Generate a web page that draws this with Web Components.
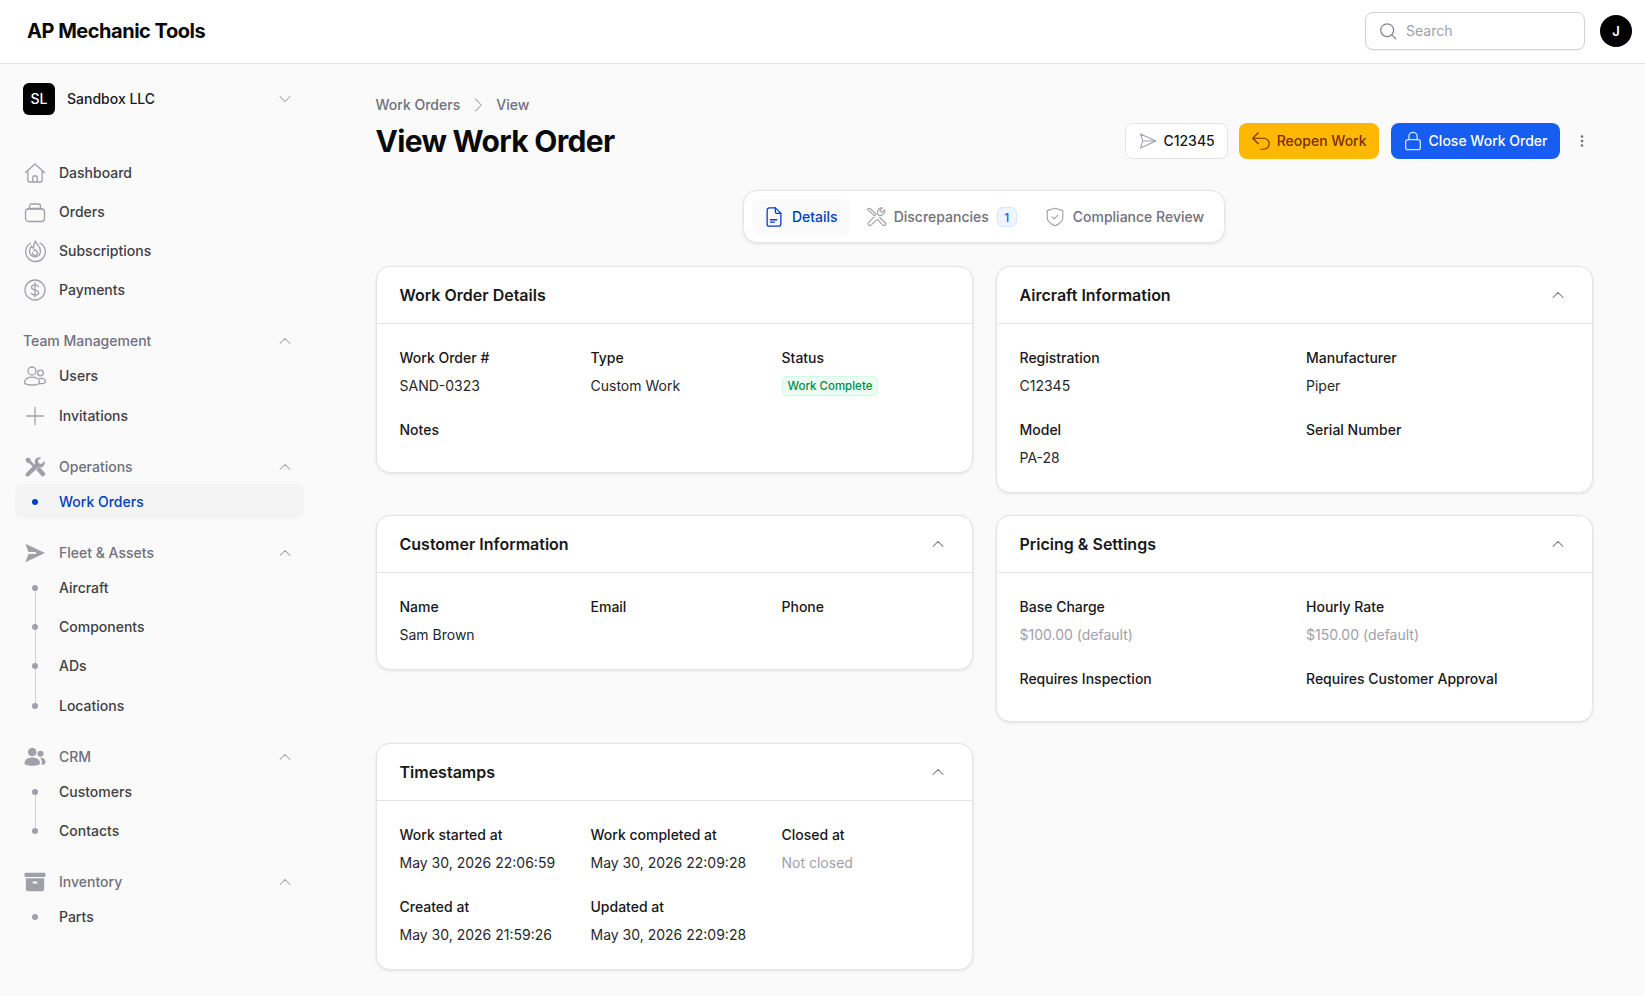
<!DOCTYPE html>
<html lang="en"><head><meta charset="utf-8"><title>View Work Order</title>
<style>
html,body{margin:0;padding:0;height:100%;background:#fafafa}
body{font:14px/20px Inter,"Liberation Sans",sans-serif;color:#18181b;-webkit-font-smoothing:antialiased}
</style></head><body>
<app-shell>
  <top-bar slot="top"></top-bar>
  <side-nav slot="side">
    <org-switch></org-switch>
    <nav-section first>
      <nav-item icon="home">Dashboard</nav-item>
      <nav-item icon="orders">Orders</nav-item>
      <nav-item icon="flame">Subscriptions</nav-item>
      <nav-item icon="dollar">Payments</nav-item>
    </nav-section>
    <nav-section title="Team Management">
      <nav-item icon="users">Users</nav-item>
      <nav-item icon="plus">Invitations</nav-item>
    </nav-section>
    <nav-section title="Operations" icon="tools">
      <nav-item dot active>Work Orders</nav-item>
    </nav-section>
    <nav-section title="Fleet &amp; Assets" icon="plane">
      <nav-item dot line="start">Aircraft</nav-item>
      <nav-item dot line="mid">Components</nav-item>
      <nav-item dot line="mid">ADs</nav-item>
      <nav-item dot line="end">Locations</nav-item>
    </nav-section>
    <nav-section title="CRM" icon="crm">
      <nav-item dot line="start">Customers</nav-item>
      <nav-item dot line="end">Contacts</nav-item>
    </nav-section>
    <nav-section title="Inventory" icon="archive">
      <nav-item dot>Parts</nav-item>
    </nav-section>
  </side-nav>
  <page-head></page-head>
  <tab-bar></tab-bar>
  <card-grid>
    <info-card title="Work Order Details" cols="3" nochev>
      <info-field label="Work Order #">SAND-0323</info-field>
      <info-field label="Type">Custom Work</info-field>
      <info-field label="Status"><status-badge>Work Complete</status-badge></info-field>
      <info-field label="Notes"></info-field>
    </info-card>
    <info-card title="Aircraft Information" cols="2">
      <info-field label="Registration">C12345</info-field>
      <info-field label="Manufacturer">Piper</info-field>
      <info-field label="Model">PA-28</info-field>
      <info-field label="Serial Number"></info-field>
    </info-card>
    <info-card title="Customer Information" cols="3">
      <info-field label="Name">Sam Brown</info-field>
      <info-field label="Email"></info-field>
      <info-field label="Phone"></info-field>
    </info-card>
    <info-card title="Pricing &amp; Settings" cols="2">
      <info-field label="Base Charge" muted>$100.00 (default)</info-field>
      <info-field label="Hourly Rate" muted>$150.00 (default)</info-field>
      <info-field label="Requires Inspection"></info-field>
      <info-field label="Requires Customer Approval"></info-field>
    </info-card>
    <info-card title="Timestamps" cols="3">
      <info-field label="Work started at">May 30, 2026 22:06:59</info-field>
      <info-field label="Work completed at">May 30, 2026 22:09:28</info-field>
      <info-field label="Closed at" muted>Not closed</info-field>
      <info-field label="Created at">May 30, 2026 21:59:26</info-field>
      <info-field label="Updated at">May 30, 2026 22:09:28</info-field>
    </info-card>
  </card-grid>
</app-shell>
<script>
const ICONS={
home:'<path d="M2.5 11.5 12 3l9.5 8.500M4.800 9.600V19a2 2 0 0 0 2 2h10.400a2 2 0 0 0 2-2V9.600M9.800 21v-5a1 1 0 0 1 1-1h2.400a1 1 0 0 1 1 1v5"/>',
orders:'<path d="M6.500 8.500V6.200c0-1.300.9-2.200 2-2.200h7c1.100 0 2 .9 2 2.200v2.300M4.700 8.800c.4-.2.9-.3 1.300-.3h12c.5 0 .9.100 1.300.3"/><rect x="2.500" y="9" width="19" height="12.500" rx="3"/>',
flame:'<path d="M7.500 4.300A9.800 9.800 0 1 0 17 4"/><path d="M12.500 2c.3 2.600 5 4.800 5 10.300a5.500 5.500 0 0 1-11 0c0-2.300.9-3.900 2.100-5.300.2 1.400.8 2.100 1.700 2.400C10.500 7 11 4 12.500 2Z"/><path d="M9.500 14a2.500 2.500 0 1 0 4.300-1.800c-.7-.7-1.300-1-1.800-1.700-.3.800-.7 1.100-1.300 1.500"/>',
dollar:'<circle cx="12" cy="12" r="10"/><path d="M15.500 8.700c-.6-1.100-1.900-1.800-3.500-1.800-2 0-3.500 1-3.500 2.600 0 3.400 7.200 1.700 7.200 5.100 0 1.600-1.600 2.600-3.700 2.600-1.700 0-3.100-.7-3.700-1.800M12 5v14"/>',
users:'<circle cx="9" cy="7" r="4"/><circle cx="17.500" cy="9" r="2.800"/><path d="M1.500 18.500C1.500 15 5 13.200 9 13.200s7.500 1.800 7.500 5.300c0 1.400-3.400 2.500-7.500 2.500s-7.500-1.100-7.500-2.500Z"/><path d="M16.500 14.500c3.400-.5 6 .8 6 3.200 0 1.200-2 1.900-5.800 1.900"/>',
plus:'<path d="M12 3.500v17M3.500 12h17"/>',
search:'<circle cx="11" cy="11" r="7.700"/><path d="m17 17 4.300 4.300"/>',
undo:'<path d="M9 3 3 9l6 6M3 9h12a6 6 0 0 1 0 12h-3"/>',
lock:'<rect x="4" y="10.500" width="16" height="11" rx="2.500"/><path d="M7.500 10.500V7a4.500 4.500 0 0 1 9 0v3.500"/>',
planeo:'<path d="M3 3.500 21.500 12 3 20.500 5.700 12 3 3.500ZM5.700 12h15.800"/>',
doc:'<path d="M13.500 2H7a2.500 2.500 0 0 0-2.500 2.500v15A2.500 2.500 0 0 0 7 22h10a2.500 2.500 0 0 0 2.500-2.500V8L13.500 2Z"/><path d="M13.500 2v4.500a1.500 1.500 0 0 0 1.500 1.500h4.500M8 17.500h4.500M8 15h7"/>',
wrench:'<path d="m3 3 2.500-.5L12 9l-1.800 1.800-6.500-6.300L3 3ZM13.500 14.500l5.700 6.200a1.900 1.900 0 0 0 2.700-2.700l-6.200-5.700M9.500 12.500l-5.700 5.600a2 2 0 0 0 2.800 2.800l5.900-5.800M14.300 9.500l.4.400 3.300.6 3.500-3.500-.2-2.800-3 2.800-2.300-2.300L19 2c-2.500-.5-5 1-5.200 3.500-.1 1.400-.4 2.700.5 4Z"/>',
shield:'<path d="M12 2.500 20.500 5v7c0 5-4.500 8-8.500 9.500C8 20 3.500 17 3.500 12V5L12 2.500Z"/><path d="m8.700 11.800 2.300 2.300 4.200-4.200"/>',
chevd:'<path d="m6 9 6 6 6-6"/>',
chevu:'<path d="m6 15 6-6 6 6"/>',
chevr:'<path d="m9 5 7 7-7 7"/>'
};
const FILLED={
tools:'<path d="M3.700 1.500 1.500 3.700 3 7l2.800.8 4.400 4.400 2-2-4.400-4.400L7 3 3.700 1.500Z"/><path d="M22.300 5.400 18.900 8.800l-2.700-1-1-2.700 3.400-3.400c-2.900-1-6.700.7-6.900 4.200 0 .9.100 1.700.5 2.500L2.300 18.700a2.100 2.100 0 0 0 0 3l.1.100c.8.800 2.200.8 3 0l10.300-9.700c.9.400 1.800.5 2.700.4 3.400-.4 5-4.200 3.900-7.100Z"/><path d="m13.200 15 5.500 6.300a2.500 2.500 0 0 0 3.700-3.500l-5.700-6-3.500 3.200Z"/>',
plane:'<path d="M1.500 2 23 12 1.500 22 4.800 13H13v-2H4.800L1.500 2Z"/>',
crm:'<circle cx="9" cy="6.500" r="4.700"/><circle cx="18" cy="8.500" r="3.300"/><path d="M.5 18.800c0-4 3.800-6.300 8.500-6.300s8.500 2.300 8.500 6.300c0 1.800-3.800 2.700-8.500 2.700S.5 20.600.5 18.800Z"/><path d="M17.800 13c3.200-.6 5.700 1.500 5.700 4.600 0 1.800-1.700 2.800-4.700 3 .6-.6.800-1.200.8-2 0-2.200-.6-4-1.800-5.600Z"/>',
archive:'<rect x="0.500" y="2" width="23" height="4.500" rx="1.200"/><path d="M2 8h20v11.500A2.500 2.500 0 0 1 19.500 22h-15A2.500 2.500 0 0 1 2 19.500V8Zm7.500 3.500v2h5v-2h-5Z" fill-rule="evenodd"/>'
};
function svg(name,size,sw,color,extra){
  const f=FILLED[name], st=extra?` style="${extra}"`:'';
  if(f) return `<svg${st} width="${size}" height="${size}" viewBox="0 0 24 24" fill="${color||'currentColor'}" aria-hidden="true">${f}</svg>`;
  return `<svg${st} width="${size}" height="${size}" viewBox="0 0 24 24" fill="none" stroke="${color||'currentColor'}" stroke-width="${sw||1.5}" stroke-linecap="round" stroke-linejoin="round" aria-hidden="true">${ICONS[name]}</svg>`;
}
function def(name,render){
  customElements.define(name,class extends HTMLElement{
    constructor(){super();this.attachShadow({mode:'open'});}
    connectedCallback(){this.shadowRoot.innerHTML=render(this);}
  });
}
const esc=s=>(s||'').replace(/&/g,'&amp;');

def('app-shell',()=>`<style>
:host{display:block}
.body{display:grid;grid-template-columns:320px minmax(0,1fr)}
main{padding:31px 52.500px 20px 55.500px;display:flex;flex-direction:column}
</style><slot name="top"></slot><div class="body"><slot name="side"></slot><main><slot></slot></main></div>`);

def('top-bar',()=>`<style>
:host{display:flex;align-items:center;justify-content:space-between;height:64px;box-sizing:border-box;background:#fff;border-bottom:1px solid #e4e4e7;padding:0 13px 1px 27px}
.logo{font-size:20px;line-height:28px;font-weight:700;letter-spacing:-.48px;color:#09090b}
.right{display:flex;align-items:center;gap:15px}
.search{display:flex;align-items:center;gap:8px;box-sizing:border-box;width:220px;height:38px;background:#fff;border:1px solid #d1d1d6;border-radius:8px;padding:0 12px;color:#a0a0ab;box-shadow:0 1px 2px rgba(16,24,40,.05)}
.av{width:32px;height:32px;border-radius:50%;background:#000;color:#fff;font-size:13px;font-weight:600;display:grid;place-items:center}
</style><div class="logo">AP Mechanic Tools</div><div class="right"><div class="search">${svg('search',20,1.5,'#85858f')}<span>Search</span></div><div class="av">J</div></div>`);

def('side-nav',()=>`<style>
:host{display:block;padding:19px 16px 0 15px;height:932px;box-sizing:border-box}
</style><slot></slot>`);

def('org-switch',()=>`<style>
:host{display:flex;align-items:center;height:32px;padding:0 9px 0 8px;margin-bottom:40px;color:#18181b;font-weight:500}
.b{width:32px;height:32px;border-radius:6px;background:#000;color:#fff;display:grid;place-items:center;margin-right:12px;font-size:14px}
.n{flex:1}
svg{display:block}
</style><span class="b">SL</span><span class="n">Sandbox LLC</span>${svg('chevd',20,1.25,'#a0a0ab')}`);

def('nav-section',h=>{
  const t=h.getAttribute('title');
  h.removeAttribute('title');
  const ic=h.getAttribute('icon');
  return `<style>
:host{display:block;margin-top:${h.hasAttribute('first')?0:'16px'}}
.h{display:flex;align-items:center;height:35px;padding:0 9px 0 8px;color:#70707b;font-weight:500;}
.h .ic{width:23px;margin-right:12px;display:flex;color:#a0a0ab;margin-left:1px}
.h .t{flex:1}
.h .c{display:flex}
.items{display:flex;flex-direction:column;gap:4.300px}
</style>${t?`<div class="h">${ic?`<span class="ic">${svg(ic,22)}</span>`:''}<span class="t">${esc(t)}</span><span class="c">${svg('chevu',20,1.25,'#a0a0ab')}</span></div>`:''}<div class="items"><slot></slot></div>`;
});

def('nav-item',h=>{
  const ic=h.getAttribute('icon'),act=h.hasAttribute('active'),line=h.getAttribute('line');
  return `<style>
:host{display:flex;align-items:center;height:35px;padding:0 8px;border-radius:8px;color:${act?'#0040c1':'#3f3f46'};font-weight:500;background:${act?'#f4f4f5':'transparent'};position:relative}
.ic{width:24px;margin-right:12px;display:flex;justify-content:center;color:#a0a0ab}
.d{width:6px;height:6px;border-radius:50%;background:${act?'#0040c1':'#a0a0ab'};position:relative;z-index:1}
.l{position:absolute;left:20px;width:1px;background:#d1d1d6}
.l.start{top:17px;bottom:-5px}.l.mid{top:-5px;bottom:-5px}.l.end{top:0;height:17px}
</style>${line?`<span class="l ${line}"></span>`:''}<span class="ic">${ic?svg(ic,24,1.3):'<span class="d"></span>'}</span><slot></slot>`;
});

def('page-head',()=>`<style>
:host{display:block}
.bc{display:flex;align-items:center;gap:8px;color:#70707b;font-weight:500;height:20px;margin-bottom:8px}
.row{display:flex;align-items:center;justify-content:space-between;height:36px}
h1{margin:0;font-size:30px;line-height:36px;font-weight:700;letter-spacing:-.7px;color:#09090b}
.acts{display:flex;align-items:center;gap:12px}
.b{display:flex;align-items:center;gap:6px;height:36px;box-sizing:border-box;border-radius:8px;padding:0 12px;font-weight:500}
.w{background:#fff;border:1px solid #e4e4e7;color:#18181b;gap:5px;margin-right:-1px}
.o{background:#ffb800;color:#7a2e0e}
.bl{background:#155eef;color:#fff}
.m{width:20px;margin-right:1px;display:flex;justify-content:center;color:#70707b}
</style><div class="bc"><span>Work Orders</span>${svg('chevr',20,1.25,'#a0a0ab')}<span>View</span></div>
<div class="row"><h1>View Work Order</h1><div class="acts">
<div class="b w">${svg('planeo',20,1.25,'#a0a0ab')}<span>C12345</span></div>
<div class="b o">${svg('undo',22,1.25,'#7a2e0e','margin:0 -1px')}<span>Reopen Work</span></div>
<div class="b bl">${svg('lock',22,1.4,'#d1e0ff','margin:0 -1px')}<span>Close Work Order</span></div>
<div class="m"><svg width="16" height="16" viewBox="0 0 16 16" fill="currentColor"><circle cx="8" cy="3.500" r="1.300"/><circle cx="8" cy="8" r="1.300"/><circle cx="8" cy="12.500" r="1.300"/></svg></div>
</div></div>`);

def('tab-bar',()=>`<style>
:host{display:flex;justify-content:center;margin-top:31px;margin-bottom:23px}
.w{display:flex;align-items:center;gap:4px;background:#fff;border:1px solid #e4e4e7;border-radius:14px;padding:0 8px;height:53px;box-sizing:border-box;box-shadow:0 1px 3px rgba(16,24,40,.1)}
.t{display:flex;align-items:center;gap:8px;height:36px;padding:0 12px;border-radius:8px;color:#70707b;font-weight:500}
.a{background:#fafafa;color:#0040c1}
.n{display:grid;place-items:center;width:20px;height:20px;box-sizing:border-box;border:1px solid #d1e9ff;background:#eff4ff;border-radius:6px;color:#155eef;font-size:12px}
</style><div class="w">
<div class="t a">${svg('doc',22,1.4,'#0040c1','margin:0 -1px')}<span>Details</span></div>
<div class="t">${svg('wrench',22,1.25,'#a0a0ab','margin:0 -1px')}<span>Discrepancies</span><span class="n">1</span></div>
<div class="t">${svg('shield',22,1.25,'#a0a0ab','margin:0 -1px')}<span>Compliance Review</span></div>
</div>`);

def('card-grid',()=>`<style>
:host{display:grid;grid-template-columns:repeat(2,minmax(0,1fr));column-gap:23px;row-gap:21.500px;align-items:start}
</style><slot></slot>`);

def('info-card',h=>{
  const t=h.getAttribute('title'),c=h.getAttribute('cols');
  h.removeAttribute('title');
  return `<style>
:host{display:block;background:#fff;border:1px solid #e4e4e7;border-radius:14px;box-shadow:0 1px 3px rgba(16,24,40,.1);overflow:hidden}
.h{display:flex;align-items:center;justify-content:space-between;height:56px;padding:0 24px 0 23px;border-bottom:1px solid #e4e4e7;font-size:16px;line-height:24px;font-weight:600;color:#18181b}
.b{display:grid;grid-template-columns:repeat(${c},minmax(0,1fr));gap:24px;padding:24px 23px}
svg{display:block}
</style><div class="h"><span>${esc(t)}</span>${h.hasAttribute('nochev')?'':svg('chevu',20,1.25,'#70707b')}</div><div class="b"><slot></slot></div>`;
});

def('info-field',h=>`<style>
:host{display:flex;flex-direction:column;gap:8px;min-width:0}
.l{font-weight:500;color:#18181b}
.v{color:${h.hasAttribute('muted')?'#a0a0ab':'#26272b'}}
</style><div class="l">${esc(h.getAttribute('label'))}</div><div class="v"><slot></slot></div>`);

def('status-badge',()=>`<style>
:host{display:inline-flex;align-items:center;height:20px;box-sizing:border-box;padding:0 5px;border:1px solid #d1fadf;background:#ecfdf3;border-radius:5px;color:#078a4a;font-size:11.500px;line-height:18px;font-weight:500;vertical-align:top}
</style><slot></slot>`);
</script>
</body></html>
